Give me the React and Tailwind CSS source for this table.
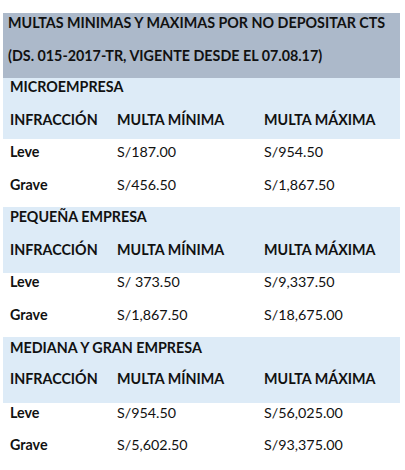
import React from "react";

const groups = [
  {
    title: "MICROEMPRESA",
    blue: { pt: "pt-0", gap: "mt-[15px]", pb: "pb-[10px]" },
    white: { pt: "pt-[4px]", gap: "mt-[15px]", h: "h-[68px]" },
    rows: [
      ["Leve", "S/187.00", "S/954.50"],
      ["Grave", "S/456.50", "S/1,867.50"],
    ],
  },
  {
    title: "PEQUEÑA EMPRESA",
    blue: { pt: "pt-[1px]", gap: "mt-[15px]", pb: "pb-[14px]" },
    white: { pt: "pt-0", gap: "mt-[15px]", h: "h-[64px]" },
    rows: [
      ["Leve", "S/ 373.50", "S/9,337.50"],
      ["Grave", "S/1,867.50", "S/18,675.00"],
    ],
  },
  {
    title: "MEDIANA Y GRAN EMPRESA",
    blue: { pt: "pt-[2px]", gap: "mt-[13px]", pb: "pb-[15px]" },
    white: { pt: "pt-[1px]", gap: "mt-[14px]", h: "h-[67px]" },
    rows: [
      ["Leve", "S/954.50", "S/56,025.00"],
      ["Grave", "S/5,602.50", "S/93,375.00"],
    ],
  },
];

function Row({ cells, bold, className = "" }) {
  return (
    <div className={`flex h-[18px] items-center leading-[18px] ${className}`}>
      <div className="w-[107px] font-bold">{cells[0]}</div>
      <div className={`w-[147px] ${bold ? "font-bold" : ""}`}>{cells[1]}</div>
      <div className={`flex-1 ${bold ? "font-bold" : ""}`}>{cells[2]}</div>
    </div>
  );
}

export default function App() {
  return (
    <div
      className="w-[405px] h-[470px] overflow-hidden bg-white pt-[13px] text-[14.3px] text-[#111]"
      style={{ fontFamily: "Lato, 'Open Sans', sans-serif" }}
    >
      <div className="ml-[3px] w-[397px]">
        <div className="h-[65px] bg-[#ACB9CA] pl-[5px] pt-[1px] font-bold">
          <div className="h-[18px] leading-[18px]">
            MULTAS MINIMAS Y MAXIMAS POR NO DEPOSITAR CTS
          </div>
          <div className="mt-[15px] h-[18px] leading-[18px]">
            (DS. 015-2017-TR, VIGENTE DESDE EL 07.08.17)
          </div>
        </div>
        {groups.map((g) => (
          <div key={g.title}>
            <div className={`bg-[#DDEBF7] pl-[7px] ${g.blue.pt} ${g.blue.pb}`}>
              <div className="h-[18px] font-bold leading-[18px]">{g.title}</div>
              <Row
                className={g.blue.gap}
                bold
                cells={["INFRACCIÓN", "MULTA MÍNIMA", "MULTA MÁXIMA"]}
              />
            </div>
            <div className={`pl-[7px] ${g.white.pt} ${g.white.h}`}>
              <Row cells={g.rows[0]} />
              <Row className={g.white.gap} cells={g.rows[1]} />
            </div>
          </div>
        ))}
      </div>
    </div>
  );
}
